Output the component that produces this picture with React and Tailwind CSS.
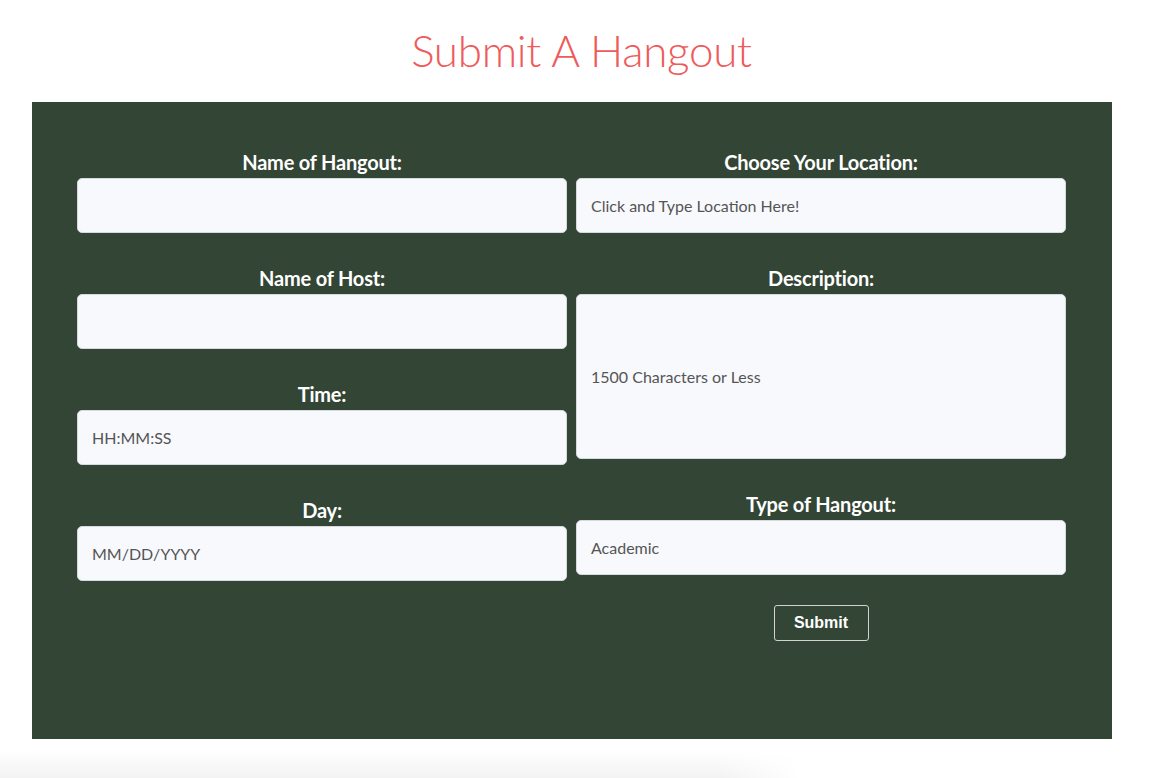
export default function App() {
  const labelCls =
    "block text-center text-white font-bold text-[20px] leading-[32px] tracking-[-0.2px]";
  const inputCls =
    "w-full h-[55px] rounded-[5px] border border-[#d6d9de] bg-[#f8f9fd] px-[14px] text-[16px] text-[#555] font-['Lato',sans-serif] outline-none";
  const Field = ({ label, placeholder, first }) => (
    <div className={first ? "" : "mt-[29px]"}>
      <label className={labelCls}>{label}</label>
      <div className={inputCls + " flex items-center"}>{placeholder}</div>
    </div>
  );
  return (
    <div className="min-h-[778px] bg-white font-['Lato',sans-serif]">
      <h1 className="pt-[24px] text-center text-[44px] leading-[52px] font-light text-[#ef5b5b] tracking-[-0.3px]">
        Submit A Hangout
      </h1>
      <div className="ml-[32px] mt-[26px] w-[1080px] h-[637px] bg-[#334535] pt-[44px] pl-[45px]">
        <div className="grid grid-cols-[490px_490px] gap-x-[9px]">
          <div>
            <Field label="Name of Hangout:" placeholder="" first />
            <Field label="Name of Host:" placeholder="" />
            <Field label="Time:" placeholder="HH:MM:SS" />
            <Field label="Day:" placeholder="MM/DD/YYYY" />
          </div>
          <div>
            <Field label="Choose Your Location:" placeholder="Click and Type Location Here!" first />
            <div className="mt-[29px]">
              <label className={labelCls}>Description:</label>
              <div className="w-full h-[165px] rounded-[5px] border border-[#d6d9de] bg-[#f8f9fd] px-[14px] text-[16px] text-[#555] flex items-center">
                1500 Characters or Less
              </div>
            </div>
            <Field label="Type of Hangout:" placeholder="Academic" />
            <div className="mt-[30px] flex justify-center">
              <button className="w-[95px] h-[36px] rounded-[3px] border border-[#d0d4d0] text-white text-[16px] font-bold font-['Liberation_Sans',Arial,sans-serif]">
                Submit
              </button>
            </div>
          </div>
        </div>
      </div>
      <div className="mt-[11px] w-[800px] h-[28px] bg-linear-to-b from-white to-[#f3f3f3] [mask-image:linear-gradient(to_right,black_90%,transparent)]"></div>
    </div>
  );
}
